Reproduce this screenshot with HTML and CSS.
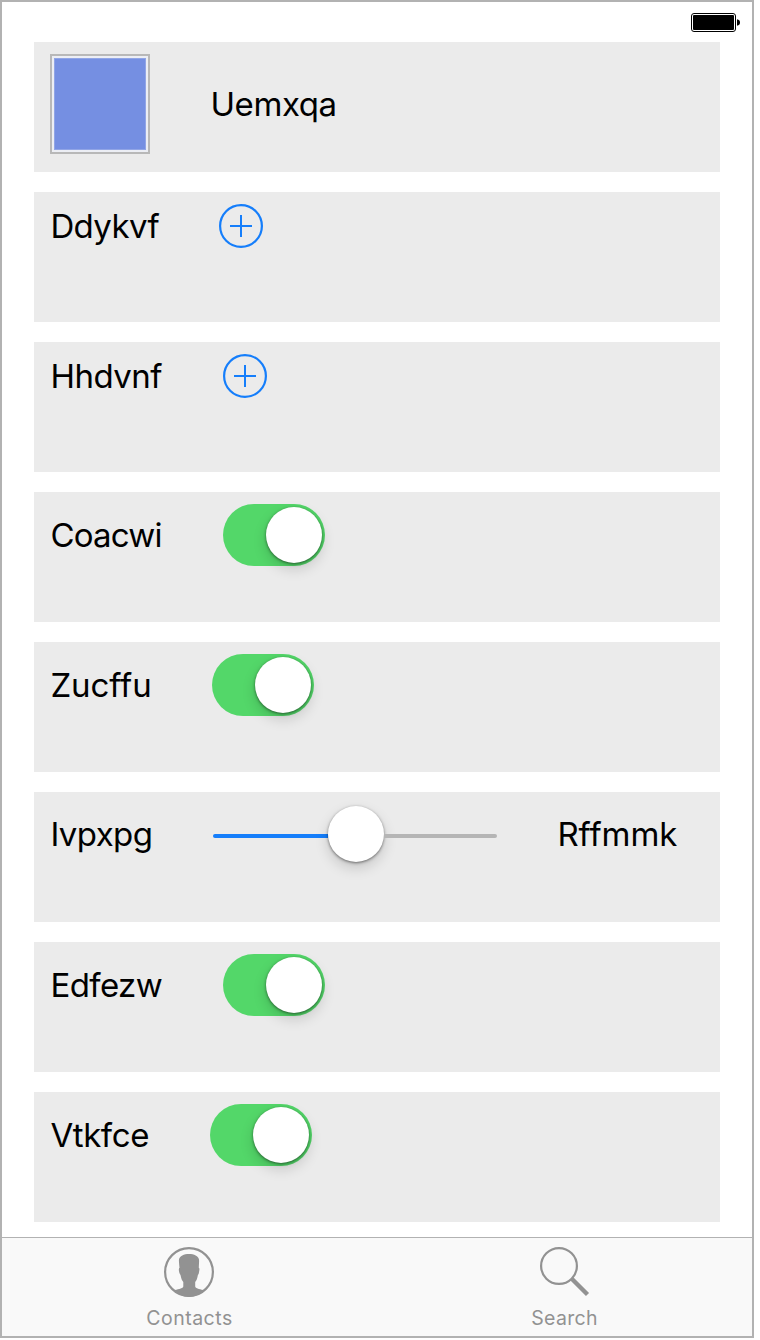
FILE: index.html
```html
<!DOCTYPE html>
<html lang="en">
<head>
<meta charset="utf-8">
<title>Settings</title>
<link rel="stylesheet" href="styles.css">
</head>
<body>
<div class="screen">
  <header class="status">
    <svg width="50" height="20" viewBox="0 0 50 20">
      <rect x=".5" y=".5" width="44" height="18" rx="2.5" fill="#fff" stroke="#000"/>
      <rect x="2" y="2" width="41" height="15" rx="1" fill="#000"/>
      <path d="M46 6.2Q49 6.8 49 9.5T46 12.8Z" fill="#000"/>
    </svg>
  </header>
  <main class="rows">
    <section class="row"><div class="line photo-line"><div class="photo"></div><span class="label uemxqa">Uemxqa</span></div></section>
    <section class="row"><div class="line"><span class="label ddykvf">Ddykvf</span><svg class="add" viewBox="0 0 44 44"><circle cx="22" cy="22" r="20.900"/><path d="M11 22H33M22 11V33"/></svg></div></section>
    <section class="row"><div class="line"><span class="label hhdvnf">Hhdvnf</span><svg class="add" viewBox="0 0 44 44"><circle cx="22" cy="22" r="20.900"/><path d="M11 22H33M22 11V33"/></svg></div></section>
    <section class="row"><div class="line"><span class="label coacwi">Coacwi</span><div class="switch"><i class="knob"></i></div></div></section>
    <section class="row"><div class="line"><span class="label zucffu">Zucffu</span><div class="switch"><i class="knob"></i></div></div></section>
    <section class="row"><div class="line slider-line"><span class="label ivpxpg">Ivpxpg</span><div class="slider"><i class="track filled"></i><i class="knob"></i><i class="track"></i></div><span class="label rffmmk">Rffmmk</span></div></section>
    <section class="row"><div class="line"><span class="label edfezw">Edfezw</span><div class="switch"><i class="knob"></i></div></div></section>
    <section class="row"><div class="line"><span class="label vtkfce">Vtkfce</span><div class="switch"><i class="knob"></i></div></div></section>
  </main>
  <nav class="tabs">
    <div class="tab">
      <svg width="51" height="50" viewBox="0 0 51 50">
        <circle cx="25" cy="25" r="23.900" fill="none" stroke="#929292" stroke-width="2.200"/>
        <path d="M25 7C30 7 34.500 9 35 12.500C35.300 15 34.800 18 34.800 20.800Q35.800 21 35.200 24Q34.800 27.500 33.900 28C33.200 32 32.500 33.500 31.200 35V39.500C32 42.300 37 42 40.500 43.500Q33.500 50 25 50T9.500 43.500C13 42 18.500 42.300 19.300 39.500V35C18 33.500 17.300 32 16.500 28Q15.200 27 14.900 23.500Q14.700 21 15.500 20.800C15.300 18 14.700 15 15 12.500C15.500 9 20 7 25 7Z" fill="#929292"/>
      </svg>
      <span class="tab-text contacts">Contacts</span>
    </div>
    <div class="tab">
      <svg width="51" height="50" viewBox="0 0 51 50">
        <circle cx="20" cy="19" r="17.900" fill="none" stroke="#929292" stroke-width="2.200"/>
        <path d="M32.500 31.500L48.500 47.500" stroke="#929292" stroke-width="4.400"/>
      </svg>
      <span class="tab-text search">Search</span>
    </div>
  </nav>
</div>
</body>
</html>
```
FILE: styles.css
```css
* { box-sizing: border-box; }
body { margin: 0; background: #fff; font-family: Inter, "Liberation Sans", sans-serif; color: #000; }
svg { display: block; flex: none; }
.screen { width: 754px; height: 1338px; border: 2px solid #b2b2b2; display: flex; flex-direction: column; }
.status { height: 40px; padding: 11px 11px 0 0; display: flex; justify-content: flex-end; flex: none; }
.rows { display: flex; flex-direction: column; gap: 20px; padding: 0 32px; flex: 1; }
.row { height: 130px; background: #ebebeb; padding: 12px 16px; flex: none; }
.line { display: flex; align-items: center; gap: 60px; width: fit-content; }
.label { font-size: 33px; line-height: 40px; white-space: nowrap; font-weight: 400; flex: none; text-indent: .4px; font-feature-settings: "calt" 0, "liga" 0; }
.photo { width: 100px; height: 100px; border: 2px solid #b8b8b8; padding: 2px; background: #758fe2 content-box; box-shadow: inset 0 0 0 2px #eceef4, inset 0 0 0 3px #91a5e6; }
.uemxqa { width: 126px; letter-spacing: -.4px; }
.ddykvf { width: 109px; letter-spacing: -.6px; }
.hhdvnf { width: 113px; letter-spacing: -.5px; }
.coacwi { width: 113px; letter-spacing: -.8px; }
.zucffu { width: 102px; letter-spacing: -.1px; }
.ivpxpg { width: 103px; letter-spacing: -.6px; }
.rffmmk { letter-spacing: -.05px; }
.edfezw { width: 113px; letter-spacing: -.6px; }
.vtkfce { width: 100px; letter-spacing: -.4px; }
.add { width: 44px; height: 44px; fill: none; stroke: #157efb; stroke-width: 2.2; }
.add path { stroke-width: 2; }
.switch { width: 102px; height: 62px; border-radius: 31px; background: #53d769; padding: 3px; display: flex; justify-content: flex-end; }
.knob { width: 56px; height: 56px; border-radius: 50%; background: #fff; flex: none; box-shadow: 0 1px 3px rgba(0,0,0,.5), 0 6px 14px rgba(0,0,0,.16); }
.slider-line { align-items: flex-start; }
.slider-line .label { margin-top: 10px; }
.slider { width: 284px; height: 64px; display: flex; align-items: center; }
.slider .knob { margin-bottom: 4px; }
.track { flex: 1; height: 4px; border-radius: 0 2px 2px 0; background: #b5b5b5; }
.track.filled { flex: 0 0 115px; background: #157efb; border-radius: 2px 0 0 2px; }
.tabs { height: 99px; flex: none; display: flex; background: #f9f9f9; border-top: 1px solid #b2b2b2; }
.tab { width: 375px; padding-top: 9px; display: flex; flex-direction: column; align-items: center; color: #929292; }
.tab-text { font-size: 19.5px; line-height: 24px; margin-top: 9px; letter-spacing: .5px; }
.search { letter-spacing: .3px; }
```
